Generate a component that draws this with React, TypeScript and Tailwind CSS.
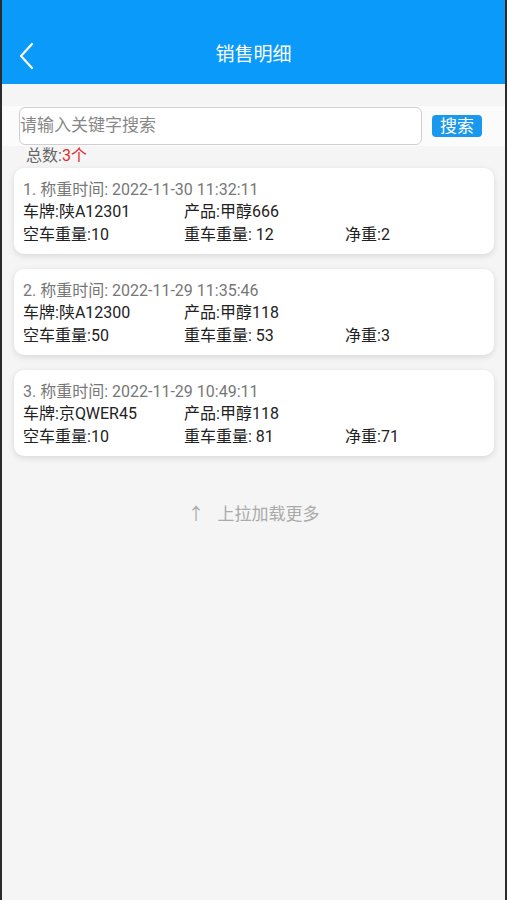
interface Record {
    time: string;
    plate: string;
    product: string;
    empty: string;
    full: string;
    net: string;
}

const records: Record[] = [
    { time: "2022-11-30 11:32:11", plate: "陕A12301", product: "甲醇666", empty: "10", full: "12", net: "2" },
    { time: "2022-11-29 11:35:46", plate: "陕A12300", product: "甲醇118", empty: "50", full: "53", net: "3" },
    { time: "2022-11-29 10:49:11", plate: "京QWER45", product: "甲醇118", empty: "10", full: "81", net: "71" },
]

const RecordCard = ({ index, item }: { index: number; item: Record }) => {
    return (
        <div className="bg-white rounded-[10px] shadow-[0_2px_6px_rgba(0,0,0,0.12)] pl-[9px] pt-[10px] h-[86px]">
            <div className="text-[16px] leading-[23px] text-[#777]">
                {index}. 称重时间: {item.time}
            </div>
            <div className="grid grid-cols-[161px_161px_1fr] text-[16px] leading-[22.5px] text-[#222]">
                <span>车牌:{item.plate}</span>
                <span>产品:{item.product}</span>
                <span></span>
                <span>空车重量:{item.empty}</span>
                <span>重车重量: {item.full}</span>
                <span>净重:{item.net}</span>
            </div>
        </div>
    )
}

export default function App() {
    return (
        <div
            className="h-[900px] w-[507px] border-x-2 border-[#2b2b2b] bg-[#f5f5f5] overflow-hidden"
            style={{ fontFamily: "Roboto, 'Noto Sans CJK SC', sans-serif" }}
        >
            <div className="bg-[#0a9bfa] h-[84px] pt-[26px]">
                <div className="relative h-[58px] flex items-center justify-center">
                    <svg className="absolute left-[16px] top-[16px]" width="20" height="28" viewBox="0 0 20 28" fill="none">
                        <path d="M14 2 L3 14 L14 26" stroke="white" strokeWidth="2.2" strokeLinecap="round" strokeLinejoin="round" />
                    </svg>
                    <h1 className="text-white text-[19px]">销售明细</h1>
                </div>
            </div>

            <div className="mt-[22px] h-[40px] bg-[#fbfbfb] flex items-center pl-[17px]">
                <div className="w-[403px] h-[38px] bg-white border border-[#cfcfcf] rounded-[6px] flex items-center">
                    <span className="text-[17px] text-[#888]">请输入关键字搜索</span>
                </div>
                <button className="ml-[10px] w-[50px] h-[22px] rounded-[4px] bg-[#1a98ee] text-white text-[17px] leading-[22px] flex items-center justify-center">
                    搜索
                </button>
            </div>

            <div className="pl-[24px] text-[16px] leading-[20px] text-[#666]">
                总数:<span className="text-[#e52a2a]">3个</span>
            </div>

            <div className="mt-[2px] ml-[12px] mr-[11px] flex flex-col gap-[15px]">
                {records.map((r, i) => (
                    <RecordCard key={i} index={i + 1} item={r} />
                ))}
            </div>

            <div className="mt-[46px] flex items-center justify-center text-[17px] text-[#aaa]">
                <span className="mr-[13px]">↑</span>
                <span>上拉加载更多</span>
            </div>
        </div>
    )
}
